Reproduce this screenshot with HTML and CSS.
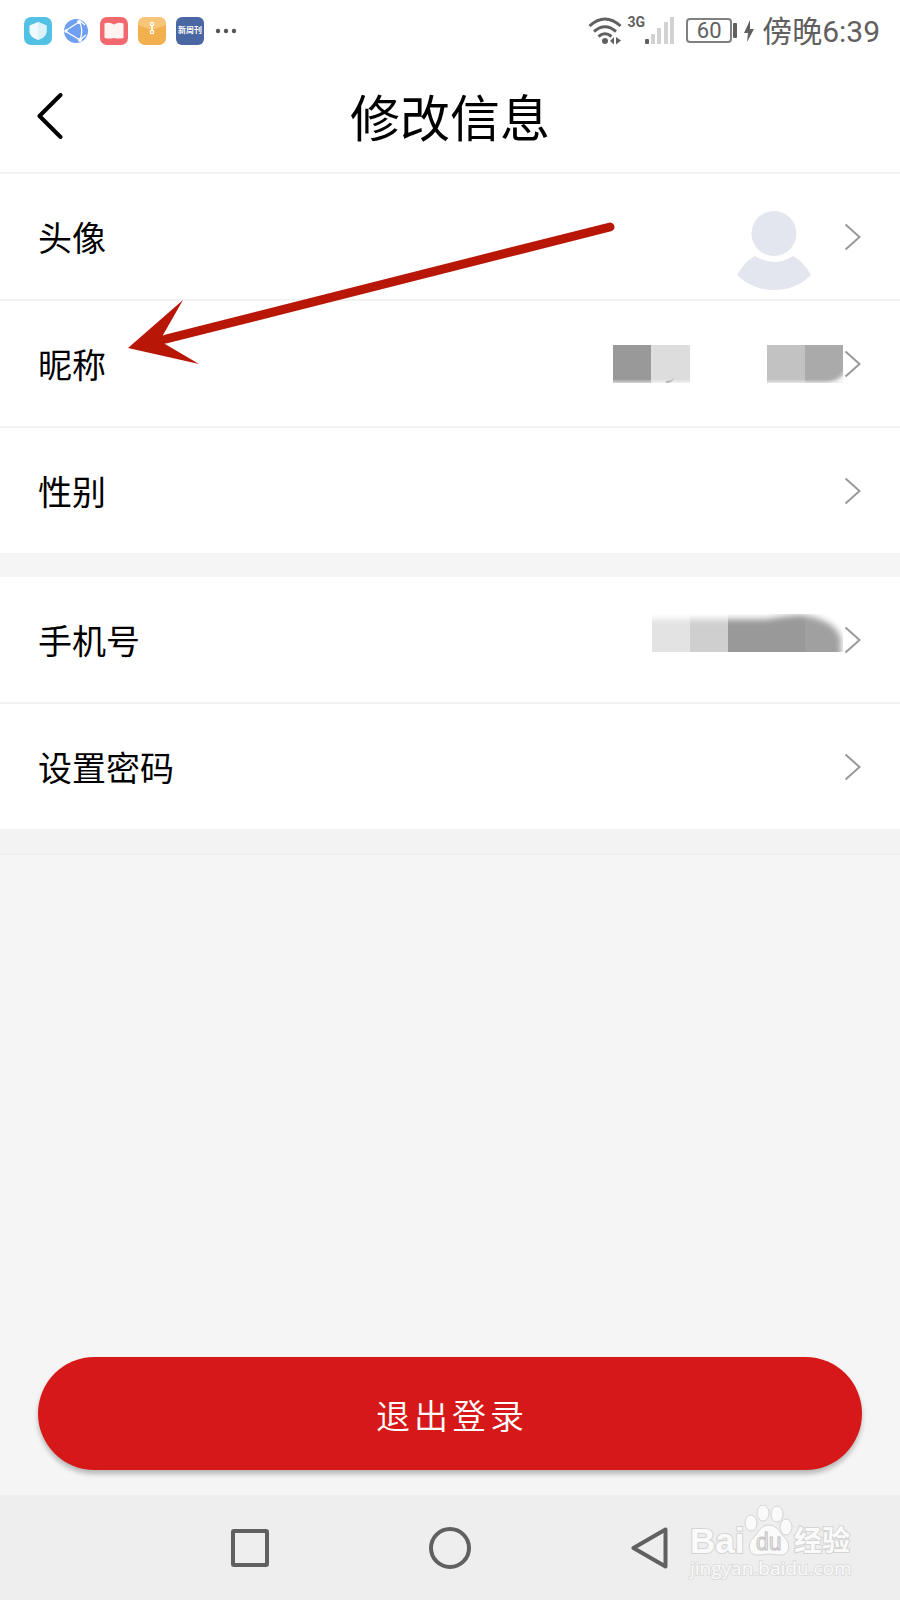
FILE: index.html
```html
<!DOCTYPE html>
<html lang="zh-CN">
<head>
    <meta charset="utf-8">
    <meta name="viewport" content="width=device-width, initial-scale=1">
    <title>修改信息</title>
    <link rel="stylesheet" href="styles.css">
</head>
<body>
    <div class="status-bar">
        <div class="status-apps">
            <svg width="28" height="28" viewBox="0 0 28 28">
                <rect width="28" height="28" rx="7" fill="#53c1e3"/>
                <path d="M14 5l8.500 3.500v6c0 4-4 7-8.500 8.500C9.500 21.500 5.500 18.500 5.500 14.500v-6z" fill="#eefafd"/>
                <path d="M14 5l8.500 3.500v6c0 4-4 7-8.500 8.500z" fill="#dcf2f8"/>
            </svg>
            <svg width="28" height="28" viewBox="0 0 28 28">
                <circle cx="14" cy="14" r="12" fill="#6f9ff0"/>
                <g fill="none" stroke="#fff" stroke-width="1.300">
                    <path d="M3 14L17 5M3 14l15 9M17 4q5 9 1 19M18 4l5 4M18 23l6-5"/>
                </g>
                <g fill="#fff">
                    <circle cx="4" cy="14" r="1.700"/>
                    <circle cx="17" cy="5" r="2"/>
                    <circle cx="18" cy="23" r="2"/>
                </g>
            </svg>
            <svg width="28" height="28" viewBox="0 0 28 28">
                <rect width="28" height="28" rx="7" fill="#f2686f"/>
                <path d="M4.500 6.500q5-2 9.500 1 4.500-3 9.500-1v14.500q-5 1-9.500 0-4.500 1-9.500 0z" fill="#fff4f2"/>
            </svg>
            <svg width="28" height="28" viewBox="0 0 28 28">
                <rect width="28" height="28" rx="7" fill="#f2b04f"/>
                <path d="M0 8V7a7 7 0 0 1 7-7h14a7 7 0 0 1 7 7v1l-14 5z" fill="#f7c57a"/>
                <path d="M14 8v6" stroke="#fff" stroke-width="1.500"/>
                <circle cx="14" cy="7" r="1.700" fill="none" stroke="#fff" stroke-width="1.200"/>
                <circle cx="14" cy="15" r="1.700" fill="none" stroke="#fff" stroke-width="1.200"/>
            </svg>
            <span class="news-app">新周刊</span>
            <svg width="28" height="28" viewBox="0 0 28 28" fill="#555">
                <circle cx="4" cy="14" r="2.200"/>
                <circle cx="12" cy="14" r="2.200"/>
                <circle cx="20" cy="14" r="2.200"/>
            </svg>
        </div>
        <div class="status-info">
            <svg width="34" height="28" viewBox="0 0 34 28">
                <g fill="none" stroke="#606060" stroke-width="3">
                    <path d="M1.500 9Q17-5 32.500 9"/>
                    <path d="M6 14.500Q17 5 28 14.500"/>
                    <path d="M10.500 19.500Q17 14 23.500 19.500"/>
                </g>
                <circle cx="17" cy="24" r="3" fill="#606060"/>
                <path d="M22 24l4-4v7.500zM28 20v7.500l5-4z" fill="#606060"/>
            </svg>
            <span class="network">3G</span>
            <svg width="29" height="28" viewBox="0 0 29 28">
                <rect x="0" y="22" width="4" height="5" rx="1" fill="#606060"/>
                <g fill="#d2d2d2">
                    <rect x="6" y="17" width="4" height="10"/>
                    <rect x="12" y="11" width="4" height="16"/>
                    <rect x="19" y="5" width="4" height="22"/>
                    <rect x="25" y="0" width="4" height="27"/>
                </g>
            </svg>
            <div class="battery">60</div>
            <svg class="bolt" width="10" height="24" viewBox="0 0 10 24">
                <path d="M6 1L0 14h4L3 23l7-13H6z" fill="#606060"/>
            </svg>
            <span class="time">傍晚6:39</span>
        </div>
    </div>

    <header class="header">
        <button class="back" type="button" aria-label="返回">
            <svg width="26" height="46" viewBox="0 0 26 46">
                <path d="M23.500 2L2.500 23l21 21" fill="none" stroke="#000" stroke-width="4" stroke-linecap="round" stroke-linejoin="round"/>
            </svg>
        </button>
        <h1>修改信息</h1>
    </header>

    <main class="content">
        <div class="group">
            <a class="row" href="#avatar">
                <span class="label">头像</span>
                <svg class="avatar" width="76" height="80" viewBox="0 0 76 80" fill="#e3e6ee">
                    <circle cx="38" cy="22.500" r="22.500"/>
                    <path d="M19 45q19 12 38 0 10 5 18 19-15 15-37 15T1 64q8-14 18-19z"/>
                </svg>
                <svg class="arrow" width="17" height="28" viewBox="0 0 17 28"><path d="M1.500 1.500L15.500 14l-14 12.500"/></svg>
            </a>
            <a class="row" href="#nickname">
                <span class="label">昵称</span>
                <svg class="value" width="230" height="38" viewBox="0 0 230 38">
                    <defs>
                        <linearGradient id="fade" x2="0" y2="1">
                            <stop offset=".9" stop-color="#fff" stop-opacity="0"/>
                            <stop offset="1" stop-color="#fff" stop-opacity=".6"/>
                        </linearGradient>
                        <filter id="soft"><feGaussianBlur stdDeviation="2"/></filter>
                    </defs>
                    <rect width="38" height="38" fill="#999"/>
                    <rect x="38" width="39" height="38" fill="#ddd"/>
                    <rect x="154" width="38" height="38" fill="#c2c2c2"/>
                    <rect x="192" width="38" height="38" fill="#aaa"/>
                    <rect width="230" height="38" fill="url(#fade)"/>
                    <path d="M53 36q5 0 8-3-2 5-8 5z" fill="#b5b5b5"/>
                    <path d="M234 25q-6 10-20 14h20z" fill="#fff" filter="url(#soft)"/>
                </svg>
                <svg class="arrow" width="17" height="28" viewBox="0 0 17 28"><path d="M1.500 1.500L15.500 14l-14 12.500"/></svg>
            </a>
            <a class="row" href="#gender">
                <span class="label">性别</span>
                <svg class="arrow" width="17" height="28" viewBox="0 0 17 28"><path d="M1.500 1.500L15.500 14l-14 12.500"/></svg>
            </a>
        </div>
        <div class="group">
            <a class="row" href="#phone">
                <span class="label">手机号</span>
                <svg class="value" width="191" height="52" viewBox="0 0 191 52">
                    <defs>
                        <filter id="edge" x="-10%" y="-20%" width="120%" height="140%"><feGaussianBlur stdDeviation="3"/></filter>
                        <mask id="shape">
                            <path d="M-20 5H115Q136 1 150 1 182 5 189 24V70H-20z" fill="#fff" filter="url(#edge)"/>
                        </mask>
                    </defs>
                    <g mask="url(#shape)">
                        <rect width="38" height="38" fill="#e3e3e3"/>
                        <rect x="38" width="38" height="38" fill="#cfcfcf"/>
                        <rect x="76" width="77" height="38" fill="#999"/>
                        <rect x="153" width="38" height="38" fill="#a0a0a0"/>
                    </g>
                </svg>
                <svg class="arrow" width="17" height="28" viewBox="0 0 17 28"><path d="M1.500 1.500L15.500 14l-14 12.500"/></svg>
            </a>
            <a class="row" href="#password">
                <span class="label">设置密码</span>
                <svg class="arrow" width="17" height="28" viewBox="0 0 17 28"><path d="M1.500 1.500L15.500 14l-14 12.500"/></svg>
            </a>
        </div>
        <div class="divider"></div>
        <button class="logout" type="button">退出登录</button>
    </main>

    <nav class="nav-bar">
        <button type="button" aria-label="最近任务">
            <svg width="42" height="42" viewBox="0 0 42 42"><rect x="4" y="4" width="34" height="34" rx="1"/></svg>
        </button>
        <button type="button" aria-label="主页">
            <svg width="42" height="42" viewBox="0 0 42 42"><circle cx="21" cy="21" r="19"/></svg>
        </button>
        <button type="button" aria-label="后退">
            <svg width="42" height="42" viewBox="0 0 42 42"><path d="M36.500 2.500v37L4.500 21z"/></svg>
        </button>
    </nav>

    <svg class="pointer" width="490" height="150" viewBox="0 0 490 150">
        <path d="M484 12L40 124" stroke="#b81606" stroke-width="9" stroke-linecap="round"/>
        <path d="M2 133L57 85 37 120l2 9 34 20z" fill="#b81606"/>
    </svg>

    <svg class="watermark" width="170" height="84" viewBox="0 0 170 84">
        <g fill="#fafafa" stroke="#d4d4d4" stroke-width="1">
            <g class="logo-text">
                <text class="bai" x="4" y="48">Bai</text>
                <text class="jingyan" x="108" y="46">经验</text>
            </g>
            <ellipse cx="65" cy="18" rx="6" ry="8"/>
            <ellipse cx="77" cy="8" rx="6" ry="8"/>
            <ellipse cx="91" cy="9" rx="6" ry="8"/>
            <ellipse cx="100" cy="22" rx="6" ry="8"/>
            <path d="M83 20c8 0 11 8 16 13 6 6 5 17-5 17-5 0-7-1-11-1s-6 1-11 1c-10 0-11-11-5-17 5-5 8-13 16-13z"/>
            <text class="du" x="70" y="45">du</text>
            <text class="url" x="4" y="70">jingyan.baidu.com</text>
        </g>
    </svg>
</body>
</html>
```
FILE: styles.css
```css
* {
    box-sizing: border-box;
    margin: 0;
    padding: 0;
}

body {
    position: relative;
    display: flex;
    flex-direction: column;
    min-height: 100vh;
    background: #f5f5f5;
    color: #000;
    font-family: Roboto, "Noto Sans CJK SC", sans-serif;
}

button {
    border: 0;
    background: none;
    font-family: inherit;
    cursor: pointer;
}

svg {
    display: block;
    flex-shrink: 0;
}

/* status bar */

.status-bar {
    display: flex;
    align-items: center;
    justify-content: space-between;
    height: 60px;
    padding: 1px 20px 0 24px;
    background: #fff;
    color: #606060;
}

.status-apps {
    display: flex;
    align-items: center;
    gap: 10px;
}

.news-app {
    width: 28px;
    height: 28px;
    border-radius: 6px;
    background: #4a67a3;
    color: #fff;
    font-size: 8px;
    font-weight: 700;
    line-height: 28px;
    text-align: center;
    white-space: nowrap;
}

.status-info {
    display: flex;
    align-items: center;
}

.network {
    align-self: flex-start;
    margin: 4px 0 0 6px;
    font-size: 14px;
    font-weight: 700;
    line-height: 16px;
}

.battery {
    position: relative;
    width: 46px;
    height: 25px;
    margin: 0 12px;
    border: 2px solid #808080;
    border-radius: 4px;
    font-size: 22px;
    line-height: 22px;
    text-align: center;
}

.battery::after {
    content: "";
    position: absolute;
    top: 3px;
    right: -7px;
    width: 4px;
    height: 15px;
    border-radius: 1px;
    background: #606060;
}

.time {
    margin-left: 8px;
    padding-top: 2px;
    font-size: 30px;
    line-height: 40px;
}

/* header */

.header {
    display: grid;
    grid-template-columns: 1fr auto 1fr;
    align-items: center;
    height: 114px;
    padding: 0 37px;
    border-bottom: 2px solid #f2f2f2;
    background: #fff;
}

.back {
    justify-self: start;
}

.header h1 {
    padding-top: 8px;
    font-size: 50px;
    font-weight: 400;
    line-height: 60px;
}

/* settings list */

.content {
    display: flex;
    flex: 1;
    flex-direction: column;
}

.group {
    margin-bottom: 24px;
    background: #fff;
}

.group + .group {
    margin-bottom: 0;
}

.row {
    display: flex;
    align-items: center;
    height: 127px;
    padding: 0 39px 0 38px;
    border-bottom: 2px solid #f2f2f2;
    color: inherit;
    text-decoration: none;
}

.row:last-child {
    height: 125px;
    border-bottom: 0;
}

.label {
    flex: 1;
    padding-top: 4px;
    font-size: 34px;
    line-height: 50px;
}

.value {
    margin-right: 1px;
}

.avatar {
    align-self: flex-end;
    margin: 0 32px 8px 0;
}

.arrow {
    fill: none;
    stroke: #999;
    stroke-width: 2;
}

.divider {
    height: 26px;
    border-bottom: 1px solid #eee;
    background: #f3f3f3;
}

.logout {
    height: 113px;
    margin: auto 38px 25px;
    padding: 2px 0 0 4px;
    border-radius: 57px;
    background: #d71818;
    box-shadow: 0 4px 5px rgba(0, 0, 0, .25);
    color: #fff;
    font-size: 34px;
    font-weight: 350;
    letter-spacing: 4px;
}

/* navigation */

.nav-bar {
    display: grid;
    grid-template-columns: repeat(3, 1fr);
    height: 105px;
    padding: 0 calc(100% / 6);
    background: #eee;
}

.nav-bar button {
    display: flex;
    align-items: center;
    justify-content: center;
}

.nav-bar svg {
    fill: none;
    stroke: #606060;
    stroke-width: 4;
    stroke-linejoin: round;
}

/* overlays */

.pointer {
    position: absolute;
    top: 215px;
    left: 126px;
    pointer-events: none;
}

.watermark {
    position: absolute;
    right: 44px;
    bottom: 11px;
    pointer-events: none;
}

.logo-text {
    stroke-width: 2;
    paint-order: stroke;
}

.bai {
    font: 700 35px "Liberation Sans", sans-serif;
}

.jingyan {
    font: 700 28px "Noto Sans CJK SC", sans-serif;
}

.du {
    font: 400 23px "Liberation Sans", sans-serif;
    fill: #eee;
    stroke: #c4c4c4;
}

.url {
    font: 400 19px "Open Sans", sans-serif;
    stroke: #dcdcdc;
    stroke-width: 2;
    paint-order: stroke;
}
```
